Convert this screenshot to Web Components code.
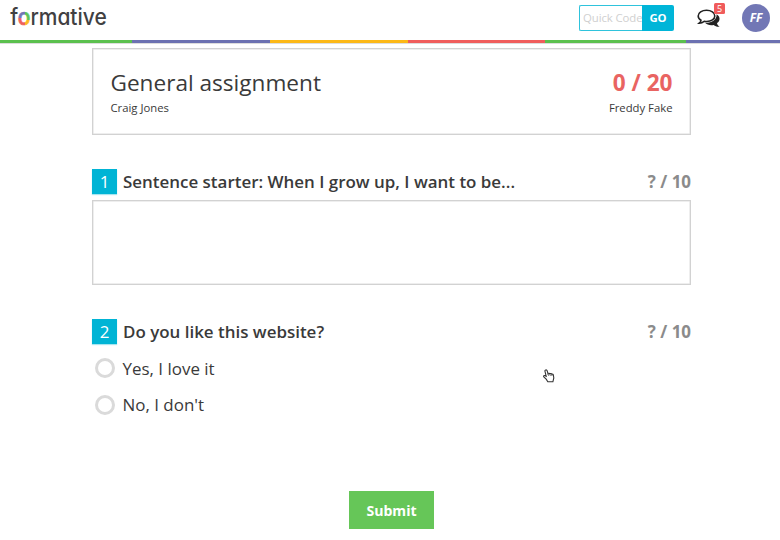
<!DOCTYPE html>
<html lang="en">
<head>
<meta charset="utf-8">
<title>Formative</title>
<style>
    body {
        margin: 0;
        height: 540px;
        overflow: hidden;
        background: #fff;
        color: #3a3a3a;
        font-family: "Open Sans", "Noto Sans", sans-serif;
    }
</style>
</head>
<body>
<formative-app></formative-app>

<script>
// Small helper: every component only needs a style block and some markup
class BaseElement extends HTMLElement {
    constructor() {
        super();
        this.attachShadow({ mode: 'open' });
    }

    connectedCallback() {
        this.shadowRoot.innerHTML = `<style>* { box-sizing: border-box; }${this.styles()}</style>${this.markup()}`;
    }
}

// =================================================================================
// Header
// =================================================================================

class BrandLogo extends BaseElement {
    styles() {
        return `
            :host { display: block; width: 110px; height: 36px; }
            svg { display: block; overflow: visible; }
            text {
                font-family: Inter, sans-serif;
                font-size: 22.5px;
                font-weight: 500;
                font-feature-settings: "cv11";
                fill: #414042;
            }
            .ring { fill: url(#ring); stroke: url(#ring); stroke-width: .7px; }
        `;
    }

    markup() {
        // the "o" is filled with four coloured quadrants
        return `
            <svg width="110" height="36" viewBox="0 0 110 36">
                <defs>
                    <pattern id="ring" patternUnits="userSpaceOnUse" x="0" y="0" width="110" height="36">
                        <rect width="15" height="18" fill="#7277b6"/>
                        <rect x="15" width="20" height="20" fill="#5fc256"/>
                        <rect y="18" width="15" height="18" fill="#ee605d"/>
                        <rect x="15" y="20" width="20" height="16" fill="#fbb91f"/>
                    </pattern>
                </defs>
                <text x="0.3" y="24.7" textLength="96.5" lengthAdjust="spacingAndGlyphs">f<tspan class="ring">o</tspan>rmative</text>
            </svg>
        `;
    }
}

class QuickCode extends BaseElement {
    styles() {
        return `
            :host { display: flex; width: 95px; height: 26px; }
            .field {
                flex: 1;
                min-width: 0;
                border: 1px solid #2fc3dc;
                border-right: 0;
                border-radius: 2px 0 0 2px;
                padding-left: 3px;
                font-size: 11.4px;
                line-height: 24px;
                letter-spacing: -.1px;
                color: #d0d0d0;
                white-space: nowrap;
            }
            button {
                width: 32px;
                padding: 0;
                border: 0;
                border-radius: 0 2px 2px 0;
                background: #00b5d8;
                color: #fff;
                font: 700 11.3px/26px "Open Sans", sans-serif;
            }
        `;
    }

    markup() {
        return `<div class="field">Quick Code</div><button>GO</button>`;
    }
}

class ChatIcon extends BaseElement {
    styles() {
        return `
            :host { display: block; position: relative; width: 24px; height: 20px; }
            svg { display: block; }
            .badge {
                position: absolute;
                left: 17px;
                top: -6px;
                width: 11px;
                height: 11px;
                border-radius: 1.5px;
                background: #f05b5b;
                color: #fff;
                font-size: 9px;
                line-height: 11px;
                text-align: center;
            }
        `;
    }

    markup() {
        return `
            <svg width="24" height="20" viewBox="0 0 24 20">
                <path d="M19.6 5.2C22 6.6 23 8.8 22.4 11C22 12.5 21 13.5 20 14.2C20.3 15.8 21.2 16.8 22.8 17.6C20.5 18 18.2 17.3 16.7 15.9C13 16.6 10 15.7 8 13.8C15 14 20 10.6 19.6 5.2Z" fill="#222"/>
                <path d="M9.5 1.2C14.2 1.2 17.8 3.6 17.8 6.9C17.8 10.2 14.2 12.5 9.7 12.5C8.8 12.5 8 12.4 7.2 12.3C5.8 13.4 4.2 14.1 2.2 14.2C3.4 13.2 4 12.3 4 11.2C2.3 10.2 1.2 8.6 1.2 6.9C1.2 3.6 4.9 1.2 9.5 1.2Z" fill="#fff" stroke="#222" stroke-width="1.6"/>
            </svg>
            <span class="badge"><slot></slot></span>
        `;
    }
}

class UserAvatar extends BaseElement {
    styles() {
        return `
            :host {
                display: block;
                width: 28px;
                height: 28px;
                border-radius: 50%;
                background: #7277b5;
                color: #fff;
                font-size: 12px;
                font-weight: 700;
                font-style: italic;
                line-height: 28px;
                text-align: center;
            }
        `;
    }

    markup() {
        return `<slot></slot>`;
    }
}

class RainbowBar extends BaseElement {
    styles() {
        return `
            :host {
                display: grid;
                grid-template-columns: 132px 138px 138px 137px 141px 1fr;
                height: 3px;
                border-bottom: 0;
                box-shadow: 0 .5px .5px #ddd;
            }
        `;
    }

    markup() {
        const colors = ['#5bc04e', '#6c71b1', '#fcb817', '#f05d5c', '#5bc04e', '#6c71b1'];
        return colors.map(color => `<i style="background: ${color}"></i>`).join('');
    }
}

class AppHeader extends BaseElement {
    styles() {
        return `
            :host { display: block; height: 43px; }
            .bar { display: flex; height: 40px; padding: 0 10px; }
            .tools { display: flex; margin-left: auto; }
            quick-code { margin-top: 5px; }
            chat-icon { margin: 9px 21px 0 23px; }
            user-avatar { margin-top: 4px; }
        `;
    }

    markup() {
        return `
            <div class="bar">
                <brand-logo></brand-logo>
                <div class="tools">
                    <quick-code></quick-code>
                    <chat-icon>5</chat-icon>
                    <user-avatar>FF</user-avatar>
                </div>
            </div>
            <rainbow-bar></rainbow-bar>
        `;
    }
}

// =================================================================================
// Assignment
// =================================================================================

class AssignmentCard extends BaseElement {
    styles() {
        return `
            :host {
                display: flex;
                justify-content: space-between;
                height: 87px;
                padding: 18px 17.5px 0;
                border: 1px solid #d2d2d2;
                box-shadow: inset 0 0 0 .5px #dedede;
            }
            .side:last-child { text-align: right; }
            .big { font-size: 22.6px; line-height: 32px; }
            .small { font-size: 11.3px; line-height: 17px; }
            .score { color: #e96462; font-weight: 700; }
        `;
    }

    markup() {
        return `
            <div class="side">
                <div class="big"><slot name="title"></slot></div>
                <div class="small"><slot name="teacher"></slot></div>
            </div>
            <div class="side">
                <div class="big score"><slot name="score"></slot></div>
                <div class="small"><slot name="student"></slot></div>
            </div>
        `;
    }
}

class QuestionItem extends BaseElement {
    styles() {
        return `
            :host { display: block; }
            .head { display: flex; height: 26px; font-size: 16.95px; line-height: 26px; font-weight: 600; }
            .number {
                width: 25px;
                height: 25px;
                margin-right: 6px;
                background: #00b4d5;
                color: #fff;
                font-weight: 400;
                line-height: 25px;
                text-align: center;
                box-shadow: 0 1px 1px #a8e5ef;
            }
            .points { margin-left: auto; color: #8b8b8b; font-weight: 700; }
        `;
    }

    markup() {
        return `
            <div class="head">
                <span class="number">${this.getAttribute('number')}</span>
                <span class="prompt">${this.getAttribute('prompt')}</span>
                <span class="points">? / ${this.getAttribute('points')}</span>
            </div>
            <slot></slot>
        `;
    }
}

class AnswerBox extends BaseElement {
    styles() {
        return `
            :host {
                display: block;
                height: 85px;
                margin-top: 5px;
                border: 1px solid #d2d2d2;
                box-shadow: inset 0 0 0 .5px #dedede;
            }
        `;
    }

    markup() {
        return ``;
    }
}

class ChoiceOption extends BaseElement {
    styles() {
        return `
            :host { display: flex; align-items: center; height: 36.5px; padding-left: 3px; font-size: 16.95px; }
            .ring { width: 20px; height: 20px; margin-right: 7.5px; border: 3px solid #dadada; border-radius: 50%; }
        `;
    }

    markup() {
        return `<span class="ring"></span><slot></slot>`;
    }
}

class SubmitButton extends BaseElement {
    styles() {
        return `
            :host { display: block; width: 85px; height: 38px; }
            button {
                width: 100%;
                height: 100%;
                padding: 0;
                border: 0;
                background: #66c658;
                color: #fff;
                font: 700 14.1px "Open Sans", sans-serif;
            }
        `;
    }

    markup() {
        return `<button><slot></slot></button>`;
    }
}

// Hand pointer floating above the page
class HandPointer extends BaseElement {
    styles() {
        return `
            :host { display: block; position: absolute; left: 543px; top: 369px; width: 12px; height: 14px; }
            svg { display: block; }
        `;
    }

    markup() {
        return `
            <svg width="12" height="14" viewBox="0 0 12 14">
                <path d="M2.4 1.1C3.2.6 3.9 1.1 4.2 1.9L5 4.6C5.6 4 6.5 4.2 6.8 4.8C7.5 4.3 8.4 4.6 8.7 5.2C9.6 4.9 10.3 5.4 10.4 6.3L10.8 9L9.9 12.8H4.8L3.2 10.2L.8 7.8C.3 7.2.8 6.4 1.6 6.6L3.2 7.3L2 2.4C1.8 1.9 2 1.4 2.4 1.1Z" fill="#fff" stroke="#333" stroke-width="1.1"/>
                <path d="M5 4.7L5.5 6.7M6.9 5L7.3 6.8M8.8 5.5L9 7" fill="none" stroke="#444" stroke-width=".9"/>
            </svg>
        `;
    }
}

class FormativeApp extends BaseElement {
    styles() {
        return `
            :host { display: block; }
            main { width: 599px; margin: 5px 0 0 92px; }
            .first { margin-top: 34px; }
            .second { margin-top: 34px; }
            choice-option:first-of-type { margin-top: 5px; }
            submit-button { margin: 68px auto 0 257px; }
        `;
    }

    markup() {
        return `
            <app-header></app-header>
            <main>
                <assignment-card>
                    <span slot="title">General assignment</span>
                    <span slot="teacher">Craig Jones</span>
                    <span slot="score">0 / 20</span>
                    <span slot="student">Freddy Fake</span>
                </assignment-card>
                <question-item class="first" number="1" points="10" prompt="Sentence starter: When I grow up, I want to be...">
                    <answer-box></answer-box>
                </question-item>
                <question-item class="second" number="2" points="10" prompt="Do you like this website?">
                    <choice-option>Yes, I love it</choice-option>
                    <choice-option>No, I don't</choice-option>
                </question-item>
                <submit-button>Submit</submit-button>
            </main>
            <hand-pointer></hand-pointer>
        `;
    }
}

customElements.define('brand-logo', BrandLogo);
customElements.define('quick-code', QuickCode);
customElements.define('chat-icon', ChatIcon);
customElements.define('user-avatar', UserAvatar);
customElements.define('rainbow-bar', RainbowBar);
customElements.define('app-header', AppHeader);
customElements.define('assignment-card', AssignmentCard);
customElements.define('question-item', QuestionItem);
customElements.define('answer-box', AnswerBox);
customElements.define('choice-option', ChoiceOption);
customElements.define('submit-button', SubmitButton);
customElements.define('hand-pointer', HandPointer);
customElements.define('formative-app', FormativeApp);
</script>
</body>
</html>
